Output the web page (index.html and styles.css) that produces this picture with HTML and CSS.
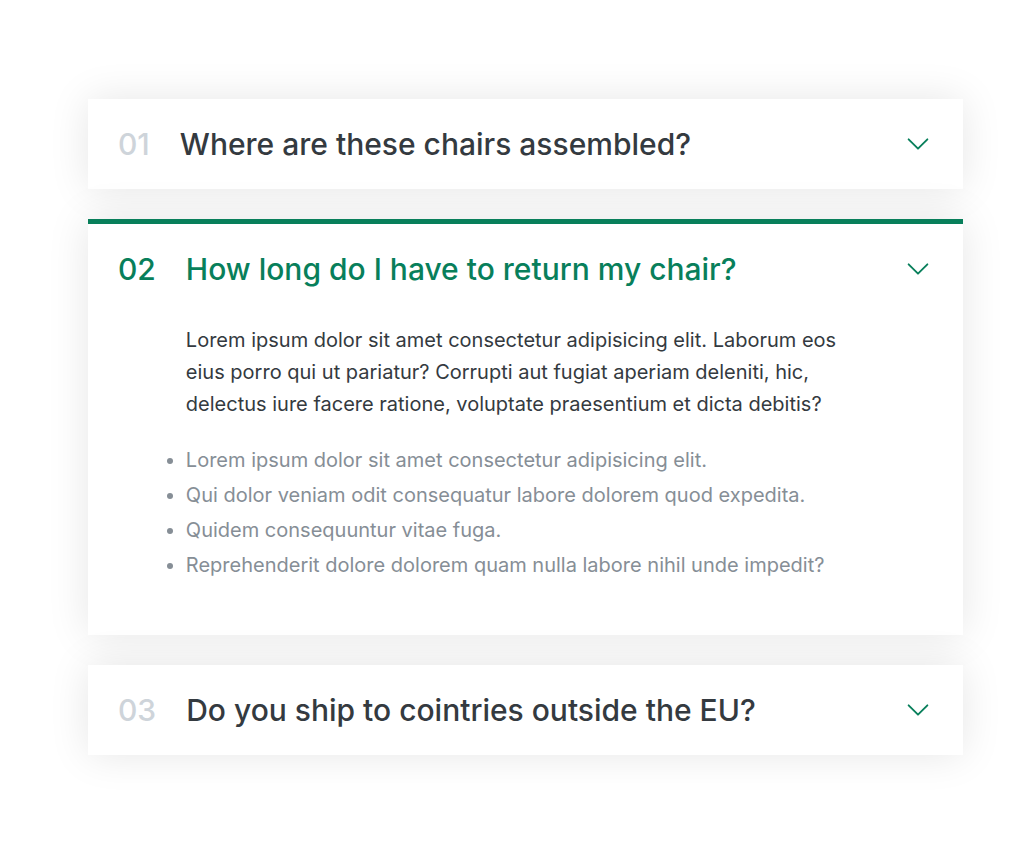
FILE: index.html
```html
<!DOCTYPE html>
<html lang="en">
<head>
<meta charset="utf-8">
<title>Accordion</title>
<link rel="stylesheet" href="styles.css">
</head>
<body>
<div class="accordion">
  <div class="item">
    <p class="number">01</p>
    <p class="title">Where are these chairs assembled?</p>
    <svg class="icon" viewBox="0 0 24 24" fill="none" stroke-width="1.5"><path stroke-linecap="round" stroke-linejoin="round" d="M19.5 8.25l-7.5 7.5-7.5-7.5"/></svg>
  </div>
  <div class="item open">
    <p class="number">02</p>
    <p class="title">How long do I have to return my chair?</p>
    <svg class="icon" viewBox="0 0 24 24" fill="none" stroke-width="1.5"><path stroke-linecap="round" stroke-linejoin="round" d="M19.5 8.25l-7.5 7.5-7.5-7.5"/></svg>
    <div class="hidden-box">
      <p>Lorem ipsum dolor sit amet consectetur adipisicing elit. Laborum eos eius porro qui ut pariatur? Corrupti aut fugiat aperiam deleniti, hic, delectus iure facere ratione, voluptate praesentium et dicta debitis?</p>
      <ul>
        <li>Lorem ipsum dolor sit amet consectetur adipisicing elit.</li>
        <li>Qui dolor veniam odit consequatur labore dolorem quod expedita.</li>
        <li>Quidem consequuntur vitae fuga.</li>
        <li>Reprehenderit dolore dolorem quam nulla labore nihil unde impedit?</li>
      </ul>
    </div>
  </div>
  <div class="item">
    <p class="number">03</p>
    <p class="title">Do you ship to cointries outside the EU?</p>
    <svg class="icon" viewBox="0 0 24 24" fill="none" stroke-width="1.5"><path stroke-linecap="round" stroke-linejoin="round" d="M19.5 8.25l-7.5 7.5-7.5-7.5"/></svg>
  </div>
</div>
</body>
</html>
```

FILE: styles.css
```css
* {
  margin: 0;
  padding: 0;
  box-sizing: border-box;
}

html,
body {
  background: #fff;
}

body {
  font-family: Inter, "Noto Sans", sans-serif;
  color: #343a40;
  padding: 99px 0 98px 88px;
}

.accordion {
  width: 875px;
  display: flex;
  flex-direction: column;
  gap: 30px;
}

.item {
  background: #fff;
  box-shadow: 0 0 40px rgba(0, 0, 0, 0.1);
  padding: 30px;
  display: grid;
  grid-template-columns: auto 1fr auto;
  column-gap: 30px;
  row-gap: 40px;
  align-items: center;
}

.number,
.title {
  font-size: 30px;
  font-weight: 500;
  line-height: 30px;
}

.number {
  color: #ced4da;
}

.icon {
  width: 30px;
  height: 30px;
  stroke: #087f5b;
}

.open {
  border-top: 5px solid #087f5b;
}

.open .number,
.open .title {
  color: #087f5b;
}

.hidden-box {
  grid-column: 2 / -1;
  padding-bottom: 28px;
}

.hidden-box p {
  font-size: 20px;
  line-height: 32px;
  margin-bottom: 28px;
  padding-right: 90px;
}

.hidden-box ul {
  color: #868e96;
  font-size: 20px;
  line-height: 24px;
  list-style-position: outside;
  display: flex;
  flex-direction: column;
  gap: 11px;
}
```
